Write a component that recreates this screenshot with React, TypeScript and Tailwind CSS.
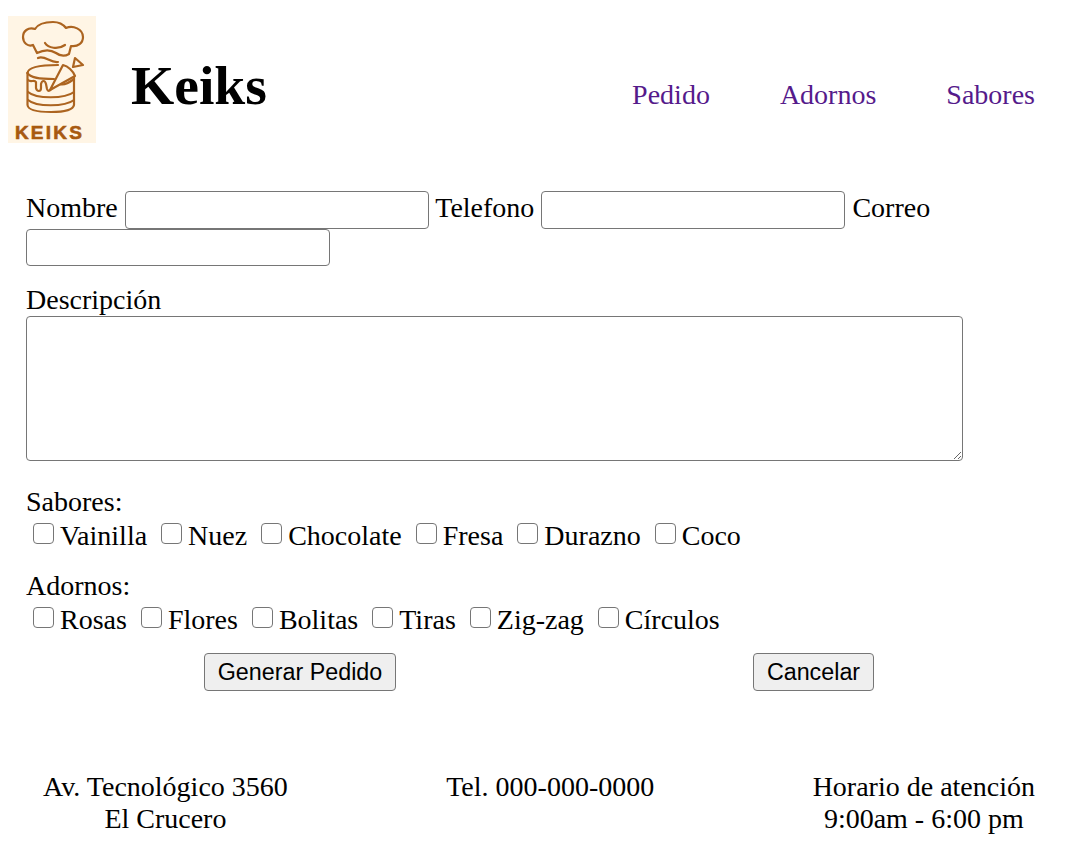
import type { ReactNode } from "react";

const sabores = ["Vainilla", "Nuez", "Chocolate", "Fresa", "Durazno", "Coco"];
const adornos = ["Rosas", "Flores", "Bolitas", "Tiras", "Zig-zag", "Círculos"];

function Logo() {
  return (
    <svg viewBox="8 16 88 127" className="block w-[88px] h-[127px] shrink-0 bg-[#fff5e5]">
      <g fill="none" stroke="#ac6420" strokeWidth="2.2" strokeLinecap="round" strokeLinejoin="round">
        {/* gorro */}
        <path d="M37 53 L33 45 C28 47 23 43 23 37 C23 31 28 27 35 29 C38 24 46 22 53 22 C59 22 63 24 66 28 C73 25 83 29 83 37 C83 43 78 47 71 46 L69 54 C64 57 60 56 56 53 C50 49 43 50 37 53 Z" />
        <path d="M45 43 C48 48 58 50 65 45" />
        <path d="M38 58 C45 55 50 63 58 62" />
        {/* pastel */}
        <path d="M27.5 73 C28 68 38 65 58 65" />
        <path d="M27.5 73 C30 78 40 79 54 79" />
        <path d="M27.5 73 L27.5 105 C28 110 38 112 51 112 C64 112 73 110 74 105 L74 76" />
        <path d="M28 80 C31 83 34 79 36 82 L36 88 C37 92 41 92 41 88 L41 84 C42 80 45 80 46 84 L47 89 C48 92 50 91 52 88" />
        <path d="M60 84 C64 86 70 82 74 79" />
        <path d="M28 92 C36 99 65 99 74 92" />
        <path d="M28 100 C36 107 65 107 74 100" />
        {/* manga */}
        <path d="M50 90 L63 65 C68 66 73 71 75 76 Z" fill="#fff5e5" />
        <path d="M73 67 L75 58 L83 65 Z" fill="#fff5e5" />
      </g>
      <text
        x="49.5"
        y="139"
        textAnchor="middle"
        fill="#a85a10"
        stroke="#a85a10"
        strokeWidth="0.6"
        fontSize="19"
        fontWeight="700"
        letterSpacing="2.2"
        fontFamily="'Liberation Sans', sans-serif"
      >
        KEIKS
      </text>
    </svg>
  );
}

function Field({ label }: { label: string }) {
  return (
    <>
      <label>{label}</label>{" "}
      <input
        type="text"
        className="inline-block w-[304px] h-[37.5px] border border-[#767676] rounded-[4px] bg-white align-[-2px]"
      />{" "}
    </>
  );
}

function Check({ label }: { label: string }) {
  return (
    <>
      <input
        type="checkbox"
        className="inline-block appearance-none w-[21px] h-[21px] ml-[7px] mr-[6px] border-[1.5px] border-[#767676] rounded-[4px] bg-white align-[1px]"
      />
      <label>{label}</label>{" "}
    </>
  );
}

function Grupo({ titulo, items }: { titulo: string; items: string[] }): ReactNode {
  return (
    <div>
      <div>{titulo}</div>
      <div className="mt-[2px]">
        {items.map((item) => (
          <Check key={item} label={item} />
        ))}
      </div>
    </div>
  );
}

export default function App() {
  return (
    <div className="min-h-[855px] bg-white text-black text-[28px] leading-[32px] font-['Liberation_Serif',serif]">
      <header className="flex items-center pt-[16px] pl-[8px] pr-[41px]">
        <Logo />
        <h1 className="ml-[35px] text-[55.6px] leading-[62px] font-bold mt-[10px]">Keiks</h1>
        <nav className="ml-auto mt-[30px] flex gap-[70px] text-[#551a8b]">
          <a>Pedido</a>
          <a>Adornos</a>
          <a>Sabores</a>
        </nav>
      </header>

      <form className="mt-[48px] px-[26px]">
        <div>
          <Field label="Nombre" />
          <Field label="Telefono" />
          <Field label="Correo" />
        </div>
        <div className="mt-[18px]">Descripción</div>
        <textarea className="block w-[937px] h-[145px] border border-[#767676] rounded-[4px] bg-white" />
        <div className="mt-[25px] flex flex-col gap-[18px]">
          <Grupo titulo="Sabores:" items={sabores} />
          <Grupo titulo="Adornos:" items={adornos} />
        </div>
        <div className="flex mt-[17px] pl-[178px]">
          <button
            type="button"
            className="h-[38px] w-[192px] border border-[#767676] rounded-[4px] bg-[#efefef] text-[23.3px] font-['Liberation_Sans',sans-serif]"
          >
            Generar Pedido
          </button>
          <button
            type="button"
            className="ml-[357px] h-[38px] w-[121px] border border-[#767676] rounded-[4px] bg-[#efefef] text-[23.3px] font-['Liberation_Sans',sans-serif]"
          >
            Cancelar
          </button>
        </div>
      </form>

      <footer className="mt-[80px] pl-[43px] pr-[41px] flex justify-between text-center">
        <div>
          Av. Tecnológico 3560
          <br />
          El Crucero
        </div>
        <div>Tel. 000-000-0000</div>
        <div>
          Horario de atención
          <br />
          9:00am - 6:00 pm
        </div>
      </footer>
    </div>
  );
}
